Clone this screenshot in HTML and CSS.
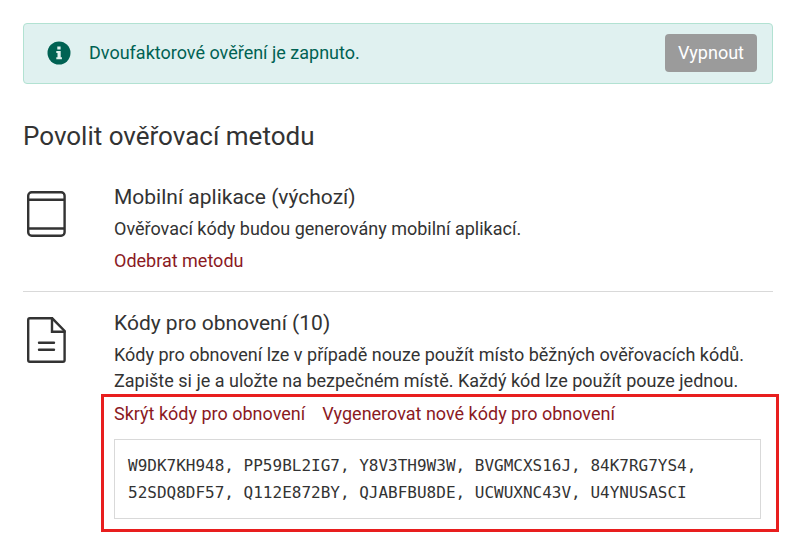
FILE: index.html
```
<!DOCTYPE html>
<html lang="cs">
<head>
    <meta charset="utf-8">
    <title>Dvoufaktorové ověření</title>
    <link rel="stylesheet" href="styles.css">
</head>
<body>
    <main class="container">
        <div class="alert">
            <svg class="alert-icon" viewBox="0 0 24 24" aria-hidden="true">
                <circle cx="12" cy="12" r="11.5" fill="#006253"/>
                <path d="M10.3 5.6h3.3v3h-3.3zM9.3 10h4.4v6.2h1.2v2H9.3v-2h1.2V12H9.3z" fill="#e0f1f0"/>
            </svg>
            <p class="alert-text">Dvoufaktorové ověření je zapnuto.</p>
            <button class="btn" type="button">Vypnout</button>
        </div>

        <h1>Povolit ověřovací metodu</h1>

        <section class="method">
            <svg class="method-icon" viewBox="0 0 40 46" aria-hidden="true">
                <rect x="2.2" y="1.3" width="36.4" height="43.4" rx="3.5"/>
                <path d="M2.2 8.7h36.4M2.2 37.5h36.4"/>
            </svg>
            <div class="method-body">
                <h2>Mobilní aplikace (výchozí)</h2>
                <p>Ověřovací kódy budou generovány mobilní aplikací.</p>
                <div class="links">
                    <a href="#">Odebrat metodu</a>
                </div>
            </div>
        </section>

        <section class="method">
            <svg class="method-icon" viewBox="0 0 40 46" aria-hidden="true">
                <path d="M3.8 1.3h22.4L38.6 14v29q0 1.7-1.7 1.7H3.8q-1.6 0-1.6-1.7V3q0-1.7 1.6-1.7z"/>
                <path d="M26 1.3v13.4h12.6M13 25.7h15M13 32.7h15" stroke-linecap="round"/>
            </svg>
            <div class="method-body">
                <h2>Kódy pro obnovení (10)</h2>
                <p>Kódy pro obnovení lze v případě nouze použít místo běžných ověřovacích kódů. Zapište si je a uložte na bezpečném místě. Každý kód lze použít pouze jednou.</p>
                <div class="highlight">
                    <div class="links">
                        <a href="#">Skrýt kódy pro obnovení</a>
                        <a href="#">Vygenerovat nové kódy pro obnovení</a>
                    </div>
                    <div class="codes">W9DK7KH948, PP59BL2IG7, Y8V3TH9W3W, BVGMCXS16J, 84K7RG7YS4, 52SDQ8DF57, Q112E872BY, QJABFBU8DE, UCWUXNC43V, U4YNUSASCI</div>
                </div>
            </div>
        </section>
    </main>
</body>
</html>
```

FILE: styles.css
```
* {
    box-sizing: border-box;
}
body {
    margin: 0;
    background: #fff;
    color: #333;
    font-family: Roboto, "Liberation Sans", sans-serif;
    font-size: 18px;
    line-height: 26px;
}
h1, h2, p {
    margin: 0;
    font-weight: 400;
}
a {
    color: #8b1a1f;
    text-decoration: none;
}
a:hover {
    text-decoration: underline;
}
.container {
    padding: 23px 13px 12px 23px;
}
.alert {
    display: flex;
    align-items: center;
    padding: 10px 15px 11px 23px;
    border: 1px solid #b2e2d2;
    border-radius: 4px;
    background: #e0f1f0;
    color: #006253;
}
.alert-icon {
    width: 24px;
    height: 24px;
    margin-right: 18px;
}
.alert-text {
    flex: 1;
}
.btn {
    padding: 6px 13px;
    border: 0;
    border-radius: 4px;
    background: #9b9b9b;
    color: #fff;
    font: inherit;
    cursor: pointer;
}
h1 {
    margin: 36px 0 30px;
    font-size: 26px;
    line-height: 32px;
}
.method {
    display: flex;
    align-items: flex-start;
    padding-left: 3px;
}
.method + .method {
    margin-top: 17px;
    padding-top: 16px;
    border-top: 1px solid #d9d9d9;
}
.method-icon {
    flex: none;
    width: 40px;
    height: 46px;
    margin: 9px 48px 0 0;
    fill: none;
    stroke: #333;
    stroke-width: 2.4;
}
.method-body {
    flex: 1;
}
h2 {
    margin-bottom: 4px;
    font-size: 21px;
    line-height: 30px;
}
.links {
    display: flex;
    flex-wrap: wrap;
    gap: 17px;
    margin-top: 6px;
}
.highlight {
    margin: 0 -6px 0 -13px;
    padding: 0 15px 10px 10px;
    border: 3px solid #e81e1e;
}
.highlight .links {
    margin-top: 4px;
}
.codes {
    margin-top: 12px;
    padding: 12px 13px;
    border: 1px solid #d9d9d9;
    font-family: "DejaVu Sans Mono", "Liberation Mono", monospace;
    font-size: 16px;
    line-height: 27px;
}
```
